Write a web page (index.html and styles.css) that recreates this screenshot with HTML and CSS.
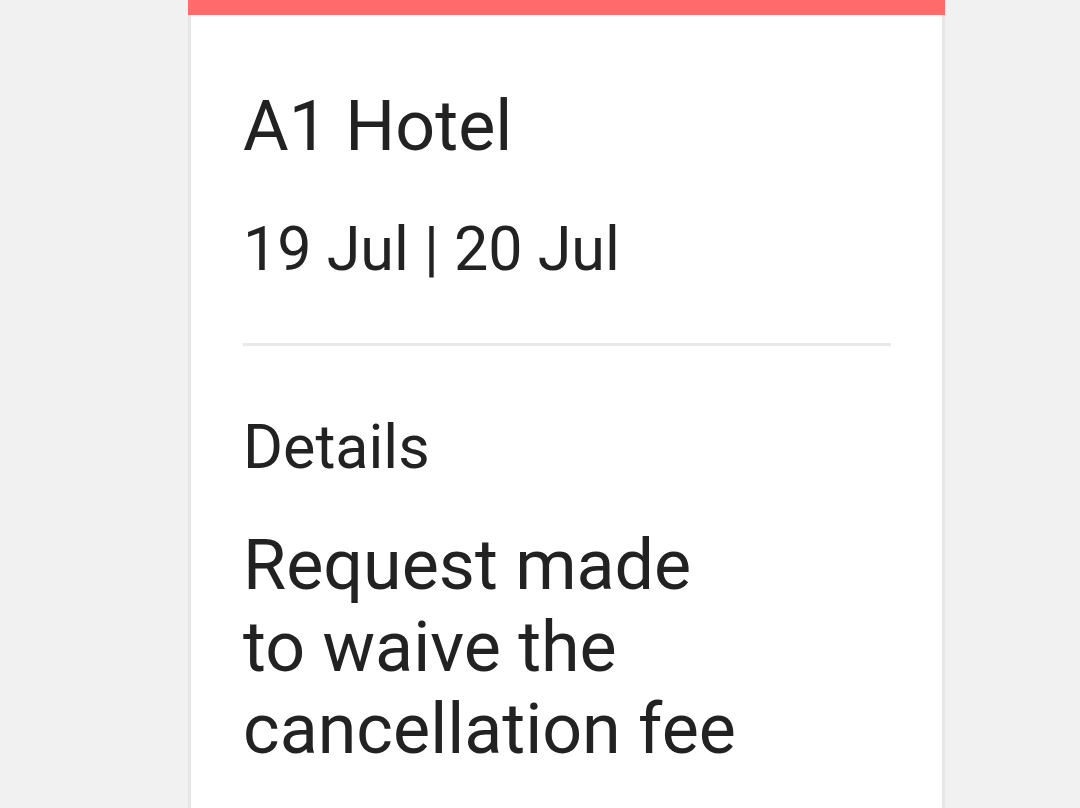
FILE: index.html
```html
<!DOCTYPE html>
<html lang="en">
<head>
<meta charset="utf-8">
<title>Booking</title>
<link rel="stylesheet" href="styles.css">
</head>
<body>
<div class="card">
  <div class="card-bar"></div>
  <div class="card-body">
    <h1 class="hotel">A1 Hotel</h1>
    <p class="dates">19 Jul | 20 Jul</p>
    <hr class="divider">
    <h2 class="label">Details</h2>
    <p class="details">Request made to waive the cancellation fee</p>
  </div>
</div>
</body>
</html>
```
FILE: styles.css
```css
html, body {
  margin: 0;
  padding: 0;
  background: #f1f1f1;
  font-family: Roboto, "Liberation Sans", sans-serif;
  color: #222222;
}
.card {
  width: 757px;
  margin-left: 188px;
  height: 808px;
  display: flex;
  flex-direction: column;
}
.card-bar {
  height: 15px;
  background: #ff6b6b;
  flex: none;
}
.card-body {
  flex: 1;
  background: #ffffff;
  border-left: 3px solid #e6e6e6;
  border-right: 3px solid #e6e6e6;
  padding: 70px 51px 0 52px;
}
.hotel {
  margin: 0;
  font-weight: 400;
  font-size: 70px;
  line-height: 82px;
}
.dates {
  margin: 46px 0 0;
  font-size: 61px;
  line-height: 72px;
}
.divider {
  margin: 58px 0 0;
  border: 0;
  height: 3px;
  background: #e8e8e8;
}
.label {
  margin: 65px 0 0;
  font-weight: 400;
  font-size: 61px;
  line-height: 72px;
}
.details {
  margin: 41px 0 0;
  font-size: 70px;
  line-height: 82px;
  max-width: 505px;
}
```
